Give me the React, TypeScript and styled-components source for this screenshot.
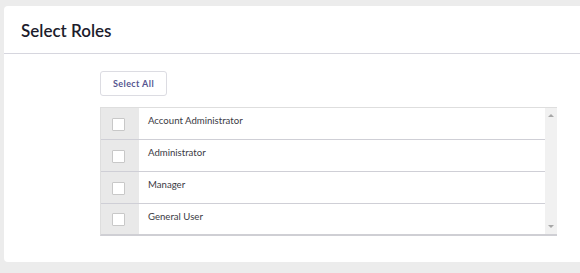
import React, { FC } from "react";
import styled, { createGlobalStyle } from "styled-components";

const GlobalStyle = createGlobalStyle`
  html, body {
    margin: 0;
    padding: 0;
    background: #ececec;
    font-family: Lato, "Open Sans", sans-serif;
  }
`;

const Page = styled.div`
  width: 580px;
  height: 273px;
  padding: 6px 0 11px 4px;
  box-sizing: border-box;
`;

const Card = styled.div`
  background: #fff;
  border-radius: 4px 0 0 4px;
  height: 100%;
  display: flex;
  flex-direction: column;
`;

const Header = styled.div`
  height: 48px;
  display: flex;
  align-items: center;
  padding-left: 17px;
  border-bottom: 1px solid #d6d6de;
  box-sizing: border-box;
`;

const Title = styled.h1`
  margin: 0;
  font-size: 17px;
  font-weight: 600;
  color: #1c1c2c;
  padding-top: 2px;
`;

const Body = styled.div`
  padding: 17px 0 0 96px;
  display: flex;
  flex-direction: column;
  align-items: flex-start;
  gap: 11px;
`;

const SelectAllButton = styled.button`
  height: 25px;
  width: 67px;
  border: 1px solid #dcdce2;
  border-radius: 3px;
  background: #fff;
  color: #55558f;
  font-family: Lato, sans-serif;
  font-size: 9px;
  font-weight: 700;
  letter-spacing: 0.4px;
  padding: 0;
`;

const Table = styled.div`
  width: 457px;
  height: 129px;
  display: flex;
  border-top: 1px solid #dedede;
  border-left: 1px solid #dedede;
  border-bottom: 2px solid #cfcfd4;
  box-sizing: border-box;
`;

const Rows = styled.div`
  flex: 1;
  display: flex;
  flex-direction: column;
`;

const Row = styled.div<{ $last?: boolean }>`
  height: 32px;
  display: flex;
  box-sizing: border-box;
  border-bottom: ${(p) => (p.$last ? "none" : "1px solid #cfcfd6")};
  flex: ${(p) => (p.$last ? 1 : "none")};
`;

const CheckCell = styled.div`
  width: 38px;
  background: #e9e9e9;
  display: flex;
  align-items: center;
  justify-content: center;
`;

const Box = styled.span`
  width: 11px;
  height: 11px;
  background: #fff;
  border: 1px solid #c8c8c8;
  border-radius: 1px;
  margin: 1px 3px 0 0;
`;

const Label = styled.div`
  padding: 7px 0 0 9px;
  font-size: 9.6px;
  color: #3a3a44;
`;

const Scrollbar = styled.div`
  width: 12px;
  background: #f1f1f1;
  display: flex;
  flex-direction: column;
  justify-content: space-between;
  align-items: center;
  padding: 6px 0 6px;
  box-sizing: border-box;
`;

const Arrow = styled.span<{ $down?: boolean }>`
  width: 0;
  height: 0;
  border-left: 3px solid transparent;
  border-right: 3px solid transparent;
  ${(p) =>
    p.$down
      ? "border-top: 3px solid #a8a8a8;"
      : "border-bottom: 3px solid #a8a8a8;"}
`;

const roles = [
  "Account Administrator",
  "Administrator",
  "Manager",
  "General User",
];

const App: FC = () => {
  return (
    <>
      <GlobalStyle />
      <Page>
        <Card>
          <Header>
            <Title>Select Roles</Title>
          </Header>
          <Body>
            <SelectAllButton>Select All</SelectAllButton>
            <Table>
              <Rows>
                {roles.map((r, i) => (
                  <Row key={r} $last={i === roles.length - 1}>
                    <CheckCell>
                      <Box />
                    </CheckCell>
                    <Label>{r}</Label>
                  </Row>
                ))}
              </Rows>
              <Scrollbar>
                <Arrow />
                <Arrow $down />
              </Scrollbar>
            </Table>
          </Body>
        </Card>
      </Page>
    </>
  );
};

export default App;
